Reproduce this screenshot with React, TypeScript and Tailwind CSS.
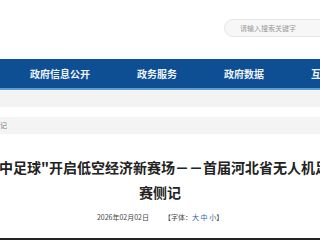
import React from "react";

export default function App() {
  const font = { fontFamily: '"Noto Sans CJK SC", "Noto Sans", sans-serif' };
  return (
    <div
      className="w-[320px] h-[240px] overflow-hidden bg-white flex flex-col font-['Noto_Sans_CJK_SC',sans-serif]"
      style={font}
    >
      {/* header with search */}
      <div className="h-[59px] shrink-0 pl-[224px] pt-[19px] overflow-hidden">
        <div className="w-[120px] h-[18px] rounded-l-full border border-[#e6e6e6] bg-[#f7f7f7] flex items-center pl-[15px]">
          <span className="text-[7px] leading-none text-[#9a9a9a] whitespace-nowrap">请输入搜索关键字</span>
        </div>
      </div>

      {/* nav */}
      <div className="h-[29px] shrink-0 bg-[#0e4f94] flex items-center pl-[30px] gap-[47px] whitespace-nowrap overflow-hidden">
        <span className="text-[10px] leading-none font-bold text-[#eef3fa]">政府信息公开</span>
        <span className="text-[10px] leading-none font-bold text-[#eef3fa]">政务服务</span>
        <span className="text-[10px] leading-none font-bold text-[#eef3fa]">政府数据</span>
        <span className="text-[10px] leading-none font-bold text-[#eef3fa]">互动交流</span>
      </div>
      <div className="h-[2px] shrink-0 bg-[#5d9ad6]" />

      {/* bands */}
      <div className="h-[1px] shrink-0 bg-[#fdf8f8]" />
      <div className="h-[16px] shrink-0 bg-[#f3f3f3]" />
      <div className="h-[10px] shrink-0 bg-white" />
      <div className="h-[17px] shrink-0 bg-[#f4f4f4] flex items-center">
        <span className="text-[7px] leading-none text-[#777]">记</span>
      </div>

      {/* title */}
      <div className="pt-[21px] flex flex-col">
        <div className="h-[25px] flex justify-center whitespace-nowrap">
          <span className="text-[14px] leading-[25px] font-bold text-[#222]">"空中足球"开启低空经济新赛场－－首届河北省无人机足球</span>
        </div>
        <div className="h-[25px] flex justify-center whitespace-nowrap">
          <span className="text-[14px] leading-[25px] font-bold text-[#222]">赛侧记</span>
        </div>
      </div>

      {/* date line */}
      <div className="mt-[7px] h-[10px] flex justify-center items-center gap-[15px] whitespace-nowrap">
        <span className="text-[7px] leading-none text-[#444]">2026年02月02日</span>
        <span className="text-[7px] leading-none text-[#444]">
          【字体：<span className="text-[#2b5fa8]">大</span> <span className="text-[#2b5fa8]">中</span> <span className="text-[#2b5fa8]">小</span>】
        </span>
      </div>

      <div className="mt-[16px] h-[2px] shrink-0 bg-[#222]" />
    </div>
  );
}
